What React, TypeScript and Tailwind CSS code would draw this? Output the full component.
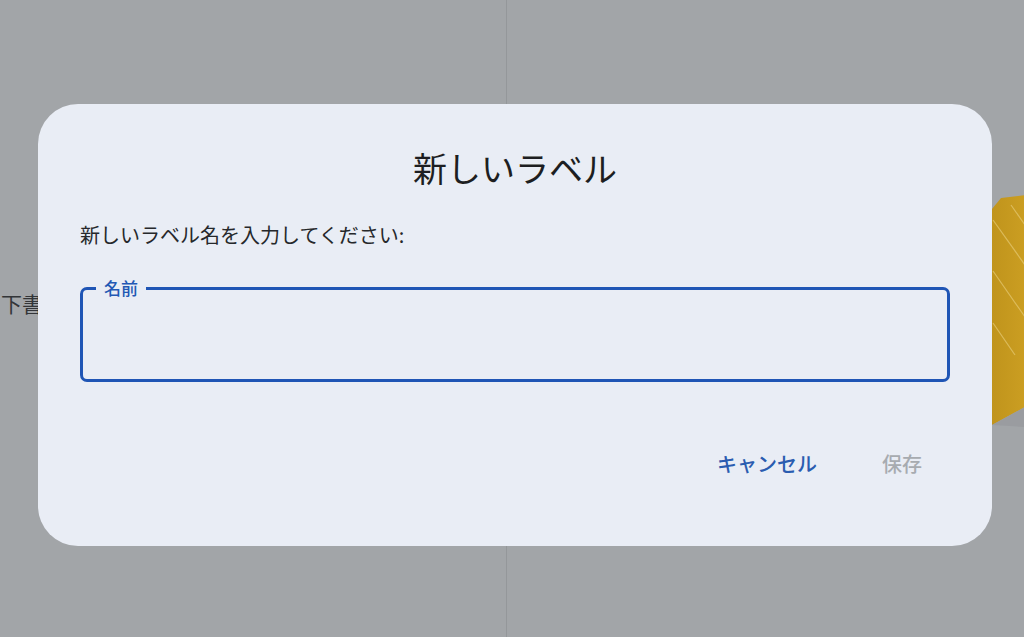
import { FC } from "react";

const font = { fontFamily: '"Noto Sans CJK JP", "Noto Sans", sans-serif' };

// 右端に見切れている黄色い付箋っぽい図形
const StickyEdge: FC = () => (
  <svg width="34" height="232" viewBox="0 0 34 232" className="absolute left-[991px] top-[195px]">
    <defs>
      <linearGradient id="edge" x1="0" y1="0" x2="1" y2="0">
        <stop offset="0" stopColor="#c0941c" />
        <stop offset="1" stopColor="#cb9e22" />
      </linearGradient>
    </defs>
    <path d="M1 14 L10 3 L34 0 L34 212 L1 230 Z" fill="url(#edge)" />
    <path d="M34 212 L1 230 L34 232 Z" fill="#9a9ca0" />
    <g stroke="#e2c46a" strokeWidth="1.2" opacity="0.8">
      <line x1="2" y1="25" x2="34" y2="70" />
      <line x1="2" y1="76" x2="34" y2="122" />
      <line x1="2" y1="128" x2="24" y2="160" />
      <line x1="20" y1="10" x2="34" y2="30" />
    </g>
  </svg>
);

const App: FC = () => {
  return (
    <div className="relative h-[637px] w-[1024px] overflow-hidden bg-[#a2a5a8]" style={font}>
      {/* 背景のアプリ画面 */}
      <div className="grid h-full grid-cols-[507px_1fr]">
        <div className="border-r border-[#94979a] pt-[288px]">
          <p className="pl-[1px] text-[21px] leading-[30px] text-[#333538]">下書き</p>
        </div>
        <div />
      </div>
      <StickyEdge />

      {/* ダイアログ */}
      <div className="absolute inset-0 pl-[38px] pt-[104px]">
        <div className="flex h-[442px] w-[954px] flex-col rounded-[40px] bg-[#e9edf5] px-[42px] pt-[44px]">
          <h2 className="text-center text-[34px] leading-[40px] text-[#1d1e21]">新しいラベル</h2>
          <p className="mt-[33px] text-[20px] leading-[28px] text-[#26282b]">
            新しいラベル名を入力してください:
          </p>

          <fieldset className="mt-[29px] h-[104px] rounded-[7px] border-[3px] border-[#1f55b5] px-[11px]">
            <legend className="ml-[2px] px-[8px] text-[17px] font-medium leading-[20px] text-[#2258b4]">
              名前
            </legend>
            <input className="h-[70px] w-full bg-transparent text-[19px] outline-none" />
          </fieldset>

          <div className="mt-[68px] flex justify-end gap-[65px] pr-[28px]">
            <button className="text-[20px] font-medium leading-[28px] text-[#2a5cb0]">キャンセル</button>
            <button className="text-[20px] font-medium leading-[28px] text-[#a7abb0]">保存</button>
          </div>
        </div>
      </div>
    </div>
  );
};

export default App;
